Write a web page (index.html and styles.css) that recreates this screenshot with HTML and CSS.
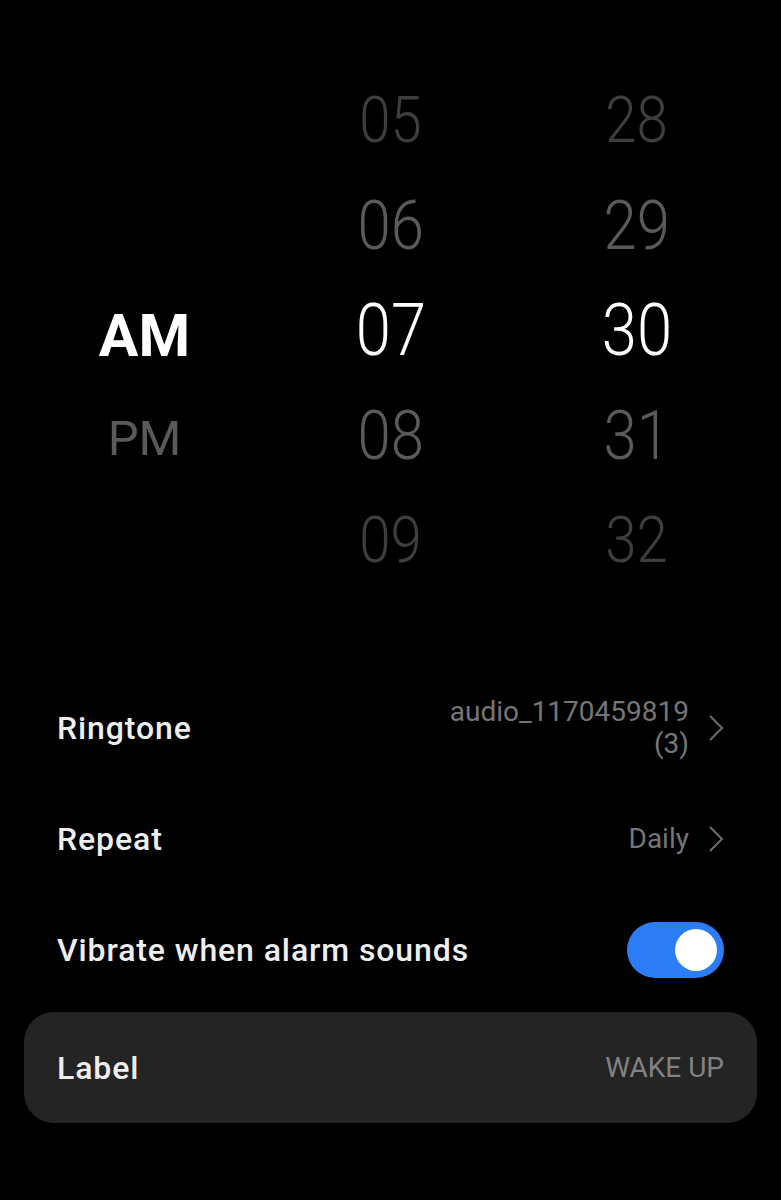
FILE: index.html
```html
<!DOCTYPE html>
<html lang="en">
<head>
  <meta charset="UTF-8">
  <title>Alarm</title>
  <link rel="stylesheet" href="styles.css">
</head>
<body>
  <!-- Time picker -->
  <div class="picker">
    <div class="wheel ampm">
      <div class="item sel"><span>AM</span></div>
      <div class="item near"><span>PM</span></div>
    </div>
    <div class="wheel digits">
      <div class="item far"><span>05</span></div>
      <div class="item near"><span>06</span></div>
      <div class="item sel"><span>07</span></div>
      <div class="item near"><span>08</span></div>
      <div class="item far"><span>09</span></div>
    </div>
    <div class="wheel digits">
      <div class="item far"><span>28</span></div>
      <div class="item near"><span>29</span></div>
      <div class="item sel"><span>30</span></div>
      <div class="item near"><span>31</span></div>
      <div class="item far"><span>32</span></div>
    </div>
  </div>

  <!-- Settings -->
  <div class="settings">
    <div class="row">
      <span class="title">Ringtone</span>
      <span class="value">audio_1170459819<br>(3)</span>
      <svg class="chevron" viewBox="0 0 16 28"><path d="M2 2 L14 14 L2 26"/></svg>
    </div>
    <div class="row">
      <span class="title">Repeat</span>
      <span class="value">Daily</span>
      <svg class="chevron" viewBox="0 0 16 28"><path d="M2 2 L14 14 L2 26"/></svg>
    </div>
    <div class="row">
      <span class="title">Vibrate when alarm sounds</span>
      <div class="toggle on"><div class="knob"></div></div>
    </div>
    <div class="row card">
      <span class="title">Label</span>
      <span class="value caps">WAKE UP</span>
    </div>
  </div>
</body>
</html>
```

FILE: styles.css
```css
body {
  margin: 0;
  background: #000;
  font-family: Roboto, "Noto Sans", sans-serif;
  color: #eeeeee;
}

/* picker */
.picker {
  display: grid;
  grid-template-columns: repeat(3, 246px);
  justify-content: center;
  padding-top: 68px;
  height: 604px;
}

.wheel .item {
  height: 105px;
  display: flex;
  align-items: center;
  justify-content: center;
}

.digits .item span {
  display: inline-block;
  font-weight: 300;
  transform: scaleX(0.88);
}

.digits .far {
  font-size: 64px;
  color: #3e3e3e;
}

.digits .near {
  font-size: 68px;
  color: #5a5a5a;
}

.digits .sel {
  font-size: 72px;
  color: #ffffff;
}

.ampm {
  padding-top: 216px;
}

.ampm .item {
  height: 103px;
}

.ampm .sel {
  font-size: 59px;
  font-weight: 700;
  color: #ffffff;
}

.ampm .near {
  font-size: 49px;
  color: #5a5a5a;
}

/* settings list */
.settings {
  margin: 0 24px;
}

.row {
  height: 111px;
  padding: 0 33px;
  display: flex;
  align-items: center;
}

.title {
  flex: 1;
  font-size: 32px;
  font-weight: 500;
  letter-spacing: 0.9px;
  color: #eeeeee;
}

.value {
  font-size: 28px;
  line-height: 32px;
  color: #767676;
  text-align: right;
}

.value.caps {
  color: #828282;
}

.chevron {
  width: 16px;
  height: 28px;
  margin-left: 19px;
  fill: none;
  stroke: #6c6c6c;
  stroke-width: 2;
}

.toggle {
  width: 97px;
  height: 56px;
  border-radius: 28px;
  background: #3a3a3a;
  display: flex;
  align-items: center;
  padding: 0 7px;
  box-sizing: border-box;
}

.toggle.on {
  background: #2b7cf5;
  justify-content: flex-end;
}

.knob {
  width: 42px;
  height: 42px;
  border-radius: 50%;
  background: #ffffff;
}

.card {
  margin-top: 7px;
  background: #242424;
  border-radius: 30px;
}
```
